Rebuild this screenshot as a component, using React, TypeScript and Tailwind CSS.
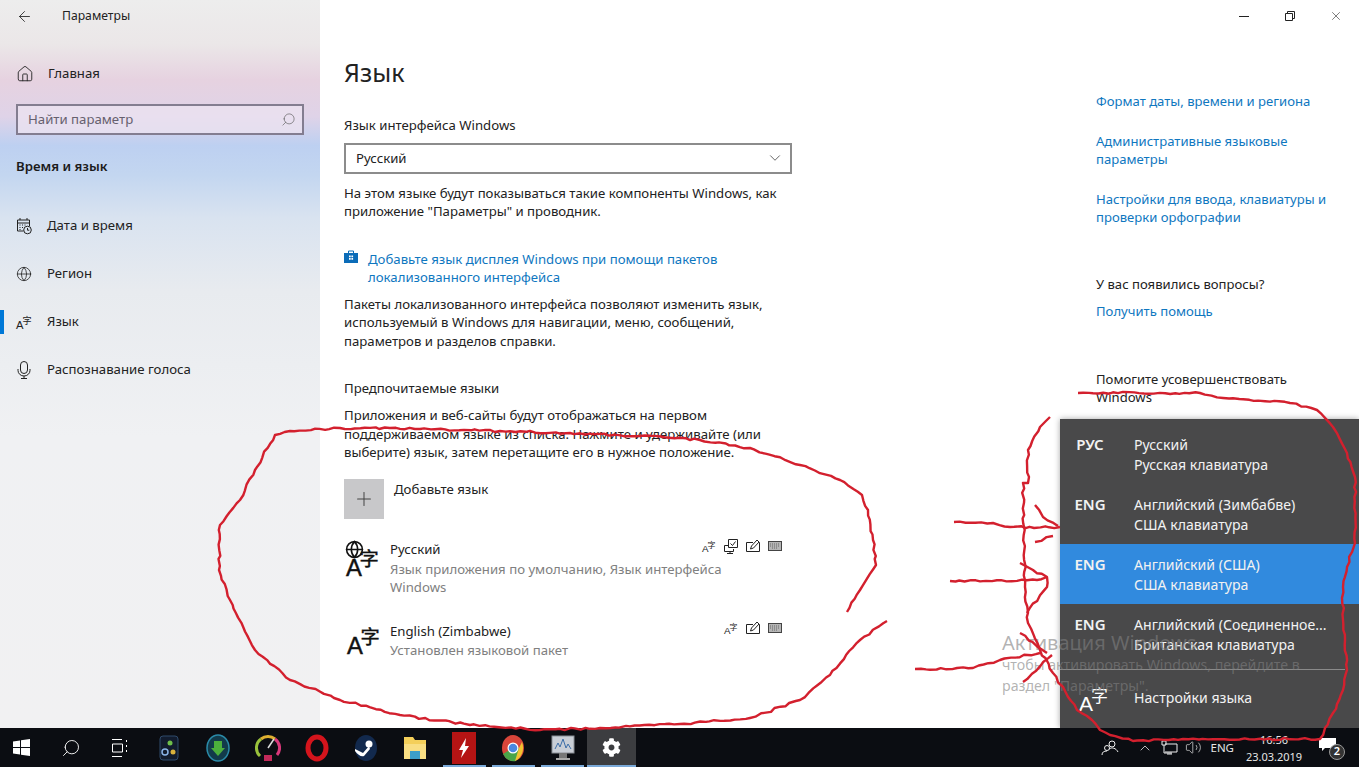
import React from 'react';
import { ArrowLeft, Home, Search, Globe, Plus, ChevronDown, X, ChevronUp, Volume2 } from 'lucide-react';
import { FaCog } from 'react-icons/fa';

const uiFont = { fontFamily: '"Noto Sans", "Open Sans", sans-serif' };

// wobbly pen line for the red marker annotations
const wobble = (pts: number[][], seed = 1) => {
  const out: string[] = [];
  let s = seed;
  const rnd = () => {
    s = (s * 9301 + 49297) % 233280;
    return s / 233280 - 0.5;
  };
  pts.forEach((p, i) => {
    if (i === 0) {
      out.push(`${p[0]},${p[1]}`);
      return;
    }
    const q = pts[i - 1];
    const len = Math.hypot(p[0] - q[0], p[1] - q[1]);
    const n = Math.max(1, Math.floor(len / 5));
    for (let k = 1; k <= n; k++) {
      const t = k / n;
      const j = k === n ? 0 : 2.2;
      out.push(`${(q[0] + (p[0] - q[0]) * t + rnd() * j).toFixed(1)},${(q[1] + (p[1] - q[1]) * t + rnd() * j).toFixed(1)}`);
    }
  });
  return out.join(' ');
};

const marks: number[][][] = [
  [[847,612],[860,590],[876,565],[873,540],[868,510],[862,495],[840,480],[800,465],[750,448],[700,440],[640,436],[570,433],[500,431],[420,429],[340,428],[290,431],[275,435],[255,470],[240,500],[220,525],[219,570],[230,600],[255,650],[290,680],[340,700],[400,715],[470,725],[540,730],[600,728],[680,724],[750,718],[800,700],[830,675],[860,640],[887,621]],
  [[1078,393],[1200,393],[1223,398],[1290,403],[1317,410],[1333,427],[1347,453],[1355,477],[1355,543],[1347,567],[1343,587],[1343,620],[1347,670],[1343,690],[1333,713],[1320,739],[1183,739],[1133,741],[1110,735],[1100,730],[1092,720],[1077,710],[1053,673],[1040,650],[1028,623],[1025,587],[1023,483],[1028,483],[1028,450],[1040,427],[1050,417]],
  [[954,522],[993,523],[1010,527],[1060,527]],
  [[1035,505],[1043,517],[1058,526]],
  [[1035,542],[1053,536]],
  [[950,581],[1037,580],[1047,577]],
  [[1020,563],[1033,570],[1047,577],[1047,587],[1027,613]],
  [[915,669],[973,668],[1000,660],[1040,653]],
  [[1020,633],[1047,653]],
  [[1052,655],[1023,682]],
];

const LangGlyph = ({ size = 30, color = '#000', heavy = false }: { size?: number; color?: string; heavy?: boolean }) => (
  <svg width={size} height={size} viewBox="0 0 30 30" className="shrink-0 overflow-visible">
    <text x="0" y="28" fontSize="21" fill={color} stroke={heavy ? color : 'none'} strokeWidth="0.4" fontFamily="Liberation Sans">A</text>
    <text x="12" y="19" fontSize="17" fill={color} stroke={heavy ? color : 'none'} strokeWidth="0.4" fontFamily="Noto Sans CJK SC">字</text>
  </svg>
);

const CalendarIcon = () => (
  <svg width="16" height="18" viewBox="0 0 16 18" fill="none" stroke="#222" strokeWidth="1">
    <path d="M1.5 3h12v6M1.5 3v11h6M1.5 6h12M4 1v2M11 1v2" />
    <path d="M3.5 8h1M6 8h1M8.500 8h1M3.5 10.5h1M6 10.5h1M3.5 12.5h1" strokeWidth="1.2" />
    <circle cx="11.5" cy="13" r="3.8" />
    <path d="M11.5 11v2.2h1.8" />
  </svg>
);

const MicIcon = () => (
  <svg width="14" height="18" viewBox="0 0 14 18" fill="none" stroke="#222">
    <rect x="3.500" y="0.500" width="7" height="12" rx="3.500" />
    <path d="M1 8v1.500a6 5.500 0 0 0 12 0V8M7 15v2.500M4 17.500h6" />
  </svg>
);

const Keyboard = () => (
  <svg width="14" height="14" viewBox="0 0 14 14" className="shrink-0">
    <rect x="0.5" y="2.5" width="13" height="9" fill="#b5b5b5" stroke="#444" />
    <path d="M2 5h10M2 7h10M4 9h6" stroke="#666" strokeDasharray="1 1" />
  </svg>
);

const PenBox = () => (
  <svg width="14" height="14" viewBox="0 0 14 14" fill="none" stroke="#222" className="shrink-0">
    <path d="M7 3.500H.5v9h13v-9H13" />
    <path d="M4.500 10l1-3 5.500-6 2 2-5.500 6z" fill="#fff" />
  </svg>
);

const ScreenCheck = () => (
  <svg width="14" height="15" viewBox="0 0 14 15" fill="none" stroke="#222" className="shrink-0">
    <path d="M.5 6.500h4M.5 6.500v6h9V10" />
    <path d="M4.500.5h9v8h-9zM6.500 4.500l2 2 3-4" />
    <path d="M3 14.500h6M6 12.500v2" />
  </svg>
);

const SmallLang = () => <LangGlyph size={14} color="#222" />;

const navItems = [
  { label: 'Дата и время', icon: <CalendarIcon /> },
  { label: 'Регион', icon: <Globe size={16} strokeWidth={1.2} color="#222" /> },
  { label: 'Язык', icon: <LangGlyph size={16} color="#222" />, active: true },
  { label: 'Распознавание голоса', icon: <MicIcon /> },
];

const Sidebar = () => (
  <aside className="w-[320px] shrink-0 bg-[linear-gradient(180deg,#ededed_0%,#ebe7e8_6%,#e6d2e0_11%,#dfd3e8_16%,#bdd0f1_20%,#c3d6f0_24%,#d9e3f0_30%,#e8ebef_40%,#f0f1f3_60%,#f1f1f2_100%)]">
    <div className="flex h-[33px] items-center">
      <ArrowLeft size={17} strokeWidth={1.2} color="#222" className="ml-[16px]" />
      <span className="ml-[29px] text-[12.200px] text-[#222]">Параметры</span>
    </div>
    <div className="mt-[25px] flex h-[32px] items-center">
      <Home size={18} strokeWidth={1.2} color="#222" className="ml-[16px]" />
      <span className="ml-[14px] text-[13.200px] text-[#222]">Главная</span>
    </div>
    <div className="ml-[16px] mt-[14px] flex h-[31px] w-[288px] items-center justify-between border-2 border-[#837d90] bg-[#ebe2f0]/80 pl-[10px] pr-[6px]">
      <span className="text-[13.200px] text-[#66606e]">Найти параметр</span>
      <Search size={15} strokeWidth={1} color="#555" className="-scale-x-100" />
    </div>
    <div className="ml-[16px] mt-[21px] h-[20px] text-[13.200px] font-semibold leading-[20px] text-[#1b1b1b]">Время и язык</div>
    <nav className="mt-[26px]">
      {navItems.map((item) => (
        <div key={item.label} className="flex h-[48px] items-center">
          <div className={item.active ? 'h-[24px] w-[4px] bg-[#0078d7]' : 'w-[4px]'} />
          <div className="ml-[12px] flex w-[16px] justify-center">{item.icon}</div>
          <span className="ml-[15px] text-[13.200px] text-[#222]">{item.label}</span>
        </div>
      ))}
    </nav>
  </aside>
);

const LangRow = ({ name, sub, icon, tools, className }: { name: string; sub: string; icon: React.ReactNode; tools: React.ReactNode; className: string }) => (
  <div className={`flex ${className}`}>
    <div className="w-[46px] shrink-0">{icon}</div>
    <div className="flex-1">
      <div className="flex h-[18.500px] justify-between pr-[10px]">
        <span className="text-[#222]">{name}</span>
        <div className="flex items-start gap-[8px] -mt-[1px]">{tools}</div>
      </div>
      <div className="mt-[1px] w-[348px] leading-[18.500px] text-[#808080]">{sub}</div>
    </div>
  </div>
);

const MainColumn = () => (
  <main className="ml-[24px] w-[448px] shrink-0 text-[13.200px] leading-[18.500px] text-[#222]">
    <h1 className="mt-[52px] h-[40px] text-[25px] leading-[40px] text-[#222]">Язык</h1>
    <div className="mt-[24px]">Язык интерфейса Windows</div>
    <div className="mt-[8px] flex h-[31px] items-center justify-between border-2 border-[#8c8c8c] pl-[10px] pr-[6px]">
      <span>Русский</span>
      <ChevronDown size={18} strokeWidth={1} color="#333" />
    </div>
    <p className="mt-[10px]">На этом языке будут показываться такие компоненты Windows, как приложение "Параметры" и проводник.</p>
    <div className="mt-[29px] flex">
      <svg width="14" height="14" viewBox="0 0 14 14" className="mr-[10px] shrink-0">
        <path d="M0 3h14v10H0z" fill="#0b6cb8" />
        <path d="M4.500 3V1h5v2" fill="none" stroke="#0b6cb8" />
        <path d="M5 5.500h1.700v1.700H5zM7.400 5.500h1.700v1.700H7.400zM5 8h1.700v1.700H5zM7.400 8h1.700v1.700H7.400z" fill="#fff" />
      </svg>
      <span className="w-[380px] text-[#0f77bf]">Добавьте язык дисплея Windows при помощи пакетов локализованного интерфейса</span>
    </div>
    <p className="mt-[8px]">Пакеты локализованного интерфейса позволяют изменить язык, используемый в Windows для навигации, меню, сообщений, параметров и разделов справки.</p>
    <h2 className="mt-[28.500px]">Предпочитаемые языки</h2>
    <p className="mt-[9px]">Приложения и веб-сайты будут отображаться на первом поддерживаемом языке из списка. Нажмите и удерживайте (или выберите) язык, затем перетащите его в нужное положение.</p>
    <div className="mt-[17.500px] flex">
      <div className="flex h-[40px] w-[40px] items-center justify-center bg-[#c8c8ca]">
        <Plus size={22} strokeWidth={1.1} color="#444" />
      </div>
      <span className="ml-[10px] mt-[1px] text-[#222]">Добавьте язык</span>
    </div>
    <LangRow
      className="mt-[21px]"
      name="Русский"
      sub="Язык приложения по умолчанию, Язык интерфейса Windows"
      icon={
        <div className="flex flex-col pl-[2px]">
          <Globe size={19} strokeWidth={2} color="#111" className="-mb-[15px] -ml-[1px]" />
          <LangGlyph size={34} color="#111" heavy />
        </div>
      }
      tools={<><SmallLang /><ScreenCheck /><PenBox /><Keyboard /></>}
    />
    <LangRow
      className="mt-[25px]"
      name="English (Zimbabwe)"
      sub="Установлен языковой пакет"
      icon={<div className="pl-[3px]"><LangGlyph size={34} color="#111" heavy /></div>}
      tools={<><SmallLang /><PenBox /><Keyboard /></>}
    />
  </main>
);

const RightColumn = () => (
  <section className="ml-[304px] flex-1 text-[13.100px] leading-[18px]">
    <div className="flex h-[32px] justify-end text-[#222]">
      <div className="flex w-[46px] items-center justify-center">
        <svg width="10" height="10" viewBox="0 0 10 10" stroke="#222"><path d="M0 5.500h10" /></svg>
      </div>
      <div className="flex w-[46px] items-center justify-center">
        <svg width="10" height="10" viewBox="0 0 10 10" fill="none" stroke="#222"><path d="M.5 2.500h7v7h-7zM2.500 2.500v-2h7v7h-2" /></svg>
      </div>
      <div className="flex w-[46px] items-center justify-center"><X size={14} strokeWidth={1} /></div>
    </div>
    <div className="mt-[60px] text-[#0f77bf]">Формат даты, времени и региона</div>
    <div className="mt-[22px] w-[220px] text-[#0f77bf]">Административные языковые параметры</div>
    <div className="mt-[22px] w-[240px] text-[#0f77bf]">Настройки для ввода, клавиатуры и проверки орфографии</div>
    <div className="mt-[49px] text-[#222]">У вас появились вопросы?</div>
    <div className="mt-[9px] text-[#0f77bf]">Получить помощь</div>
    <div className="mt-[50px] w-[220px] text-[#222]">Помогите усовершенствовать Windows</div>
  </section>
);

const layouts = [
  { code: 'РУС', name: 'Русский', kb: 'Русская клавиатура' },
  { code: 'ENG', name: 'Английский (Зимбабве)', kb: 'США клавиатура' },
  { code: 'ENG', name: 'Английский (США)', kb: 'США клавиатура', active: true },
  { code: 'ENG', name: 'Английский (Соединенное...', kb: 'Британская клавиатура' },
];

const LangMenu = () => (
  <div className="absolute bottom-0 right-0 h-[309px] w-[299px] bg-[#49494a] pt-[5px] text-[14.100px] leading-[20px] text-[#f2f2f2] shadow-[0_0_6px_rgba(0,0,0,0.35)]">
    {layouts.map((l) => (
      <div key={l.name} className={`flex h-[60px] pt-[11px] ${l.active ? 'bg-[#318ade]' : ''}`}>
        <div className="mr-[14px] -mt-[1px] w-[60px] text-center text-[15px] font-semibold">{l.code}</div>
        <div>
          <div>{l.name}</div>
          <div>{l.kb}</div>
        </div>
      </div>
    ))}
    <div className="mt-[5px] mr-[14px] h-px bg-[#8a8a8a]" />
    <div className="flex h-[56px] items-center">
      <div className="flex w-[74px] justify-center pr-[6px]"><LangGlyph size={30} color="#fff" /></div>
      <span>Настройки языка</span>
    </div>
  </div>
);

const Watermark = () => (
  <div className="absolute left-[1002px] top-[630px] text-[#808080]/60">
    <div className="text-[20px] leading-[26px]">Активация Windows</div>
    <div className="-mt-[2px] w-[320px] text-[14.200px] leading-[21px]">чтобы активировать Windows, перейдите в раздел "Параметры".</div>
  </div>
);

const AppIcon = ({ kind }: { kind: number }) => {
  switch (kind) {
    case 0:
      return (
        <svg width="20" height="26" viewBox="0 0 20 26">
          <rect x="1" y="1" width="18" height="24" rx="3" fill="#121c2e" stroke="#2f4a6b" />
          <circle cx="11" cy="8" r="2.500" fill="#6fbf4a" />
          <circle cx="6" cy="17" r="3" fill="none" stroke="#8ab4e8" strokeWidth="1.500" />
          <circle cx="14" cy="17" r="2.500" fill="#d9b23c" />
        </svg>
      );
    case 1:
      return (
        <svg width="24" height="28" viewBox="0 0 24 28">
          <ellipse cx="12" cy="14" rx="11" ry="13" fill="#123a4a" stroke="#2a8aa8" strokeWidth="1.500" />
          <path d="M8 7h8v7h3l-7 8-7-8h3z" fill="#4caf3c" />
        </svg>
      );
    case 2:
      return (
        <svg width="26" height="30" viewBox="0 0 26 30" fill="none">
          <path d="M5 23A11 11 0 0 1 6 6" stroke="#9ac23c" strokeWidth="3" />
          <path d="M6 6A11 11 0 0 1 20 6" stroke="#e0b030" strokeWidth="3" />
          <path d="M20 6A11 11 0 0 1 22 22" stroke="#d8387a" strokeWidth="3" />
          <path d="M13 15l6-9" stroke="#ddd" strokeWidth="1.500" />
          <rect x="9" y="22" width="8" height="6" fill="#c22a5a" />
        </svg>
      );
    case 3:
      return (
        <svg width="24" height="28" viewBox="0 0 24 28" fill="none">
          <ellipse cx="12" cy="14" rx="9" ry="11" stroke="#d4141c" strokeWidth="5" />
        </svg>
      );
    case 4:
      return (
        <svg width="24" height="28" viewBox="0 0 24 28">
          <ellipse cx="12" cy="14" rx="11" ry="13" fill="#12294d" />
          <circle cx="15" cy="10" r="3.500" fill="#fff" />
          <path d="M1 15l8 4 6-7 1 3-6 7c-3 1-6-1-9-5z" fill="#fff" />
        </svg>
      );
    case 5:
      return (
        <svg width="22" height="24" viewBox="0 0 22 24">
          <path d="M0 1h9l2 3h11v19H0z" fill="#f4cf5a" />
          <path d="M0 8h22v15H0z" fill="#f9de83" />
          <path d="M6 15h10v8H6z" fill="#3d9fc9" />
        </svg>
      );
    case 6:
      return (
        <svg width="24" height="32" viewBox="0 0 24 32">
          <rect width="24" height="32" fill="#b51414" />
          <path d="M14 6l-7 12h4l-2 8 8-12h-4z" fill="#fff" />
        </svg>
      );
    case 7:
      return (
        <svg width="24" height="28" viewBox="0 0 24 28">
          <ellipse cx="12" cy="14" rx="11" ry="13" fill="#d8453a" />
          <path d="M2 20A12 14 0 0 0 15 27L20 14H12z" fill="#4aa548" />
          <path d="M21 8A12 14 0 0 1 14 27L18 14z" fill="#f2c230" />
          <circle cx="12" cy="14" r="5.500" fill="#fff" />
          <circle cx="12" cy="14" r="4.300" fill="#4a88e0" />
        </svg>
      );
    default:
      return (
        <svg width="24" height="28" viewBox="0 0 24 28">
          <rect x="1" y="2" width="22" height="17" fill="#c9ced6" stroke="#8a8f96" />
          <path d="M4 15l3-6 2 4 3-8 3 9 2-4 3 5" fill="none" stroke="#3d6ea8" />
          <path d="M8 19h8v5H8z" fill="#777" />
          <path d="M5 24h14v2H5z" fill="#aaa" />
        </svg>
      );
  }
};

const Taskbar = () => (
  <footer className="relative flex h-[39px] items-stretch bg-[#0b0d12]">
    <div className="flex -ml-[3px]">
      <div className="flex w-[49.200px] items-center justify-center">
        <svg width="17" height="17" viewBox="0 0 17 17" fill="#fff"><path d="M0 2.400l7-1v6.600H0zM8 1.200L17 0v8H8zM0 9h7v6.600l-7-1zM8 9h9v8l-9-1.200z" /></svg>
      </div>
      <div className="flex w-[49.200px] items-center justify-center">
        <Search size={20} strokeWidth={1.1} color="#fff" className="-scale-x-100" />
      </div>
      <div className="flex w-[49.200px] items-center justify-center">
        <svg width="17" height="18" viewBox="0 0 17 18" fill="none" stroke="#fff"><path d="M1 .5h10M1 17.500h10M1.500 5h10v8h-10zM15.500 1v2M15.500 6v2M15.500 11v2" /></svg>
      </div>
      {[0, 1, 2, 3, 4, 5, 6, 7, 8].map((k) => (
        <div key={k} className="relative flex w-[49.200px] items-center justify-center">
          <AppIcon kind={k} />
          {k >= 6 && <div className="absolute bottom-0 left-[3px] right-[3px] h-[2px] bg-[#7aa9d8]" />}
        </div>
      ))}
      <div className="relative flex w-[49.200px] items-center justify-center bg-[#3c3d40]">
        <FaCog size={19} color="#fff" />
        <div className="absolute bottom-0 left-0 right-0 h-[2px] bg-[#7aa9d8]" />
      </div>
    </div>
    <div className="ml-auto flex items-center text-[#e6e6e6]">
      <svg width="18" height="16" viewBox="0 0 18 16" fill="none" stroke="#eee" className="mr-[18px]"><circle cx="11" cy="4" r="3" /><circle cx="6" cy="8" r="2.500" /><path d="M1 15c0-3 2-4 5-4M8 9c3-2 7-1 9 3" /></svg>
      <ChevronUp size={16} strokeWidth={1.2} className="mr-[8px]" />
      <svg width="17" height="15" viewBox="0 0 17 15" fill="none" stroke="#eee" className="mr-[7px]"><path d="M4 4h12v8H4M1 1h4v4H1zM3 5v8h8M6 14h5" /></svg>
      <Volume2 size={17} strokeWidth={1} className="mr-[8px]" />
      <span className="text-[11.500px]">ENG</span>
      <div className="ml-[1px] w-[78px] text-center text-[11px] leading-[17px]">
        <div>16:56</div>
        <div>23.03.2019</div>
      </div>
      <div className="relative ml-[6px] mr-[14px] h-[24px] w-[26px]">
        <svg width="17" height="14" viewBox="0 0 17 14" fill="#fff" className="absolute left-[0px] top-[2px]"><path d="M0 0h17v10H6l-3 3v-3H0z" /></svg>
        <div className="absolute bottom-0 right-[0px] flex h-[16px] w-[16px] items-center justify-center rounded-full border border-[#999] bg-[#333] text-[11px] font-semibold text-white">2</div>
      </div>
    </div>
  </footer>
);

export default function App() {
  return (
    <div className="relative flex h-[767px] w-[1359px] flex-col overflow-hidden bg-white" style={uiFont}>
      <div className="relative flex h-[728px]">
        <Sidebar />
        <MainColumn />
        <RightColumn />
        <LangMenu />
        <Watermark />
      </div>
      <Taskbar />
      <svg className="pointer-events-none absolute left-0 top-0" width="1359" height="767" fill="none" stroke="#d3202e" strokeWidth="2.4" strokeLinejoin="round">
        {marks.map((m, i) => (
          <polyline key={i} points={wobble(m, i + 7)} />
        ))}
      </svg>
    </div>
  );
}
